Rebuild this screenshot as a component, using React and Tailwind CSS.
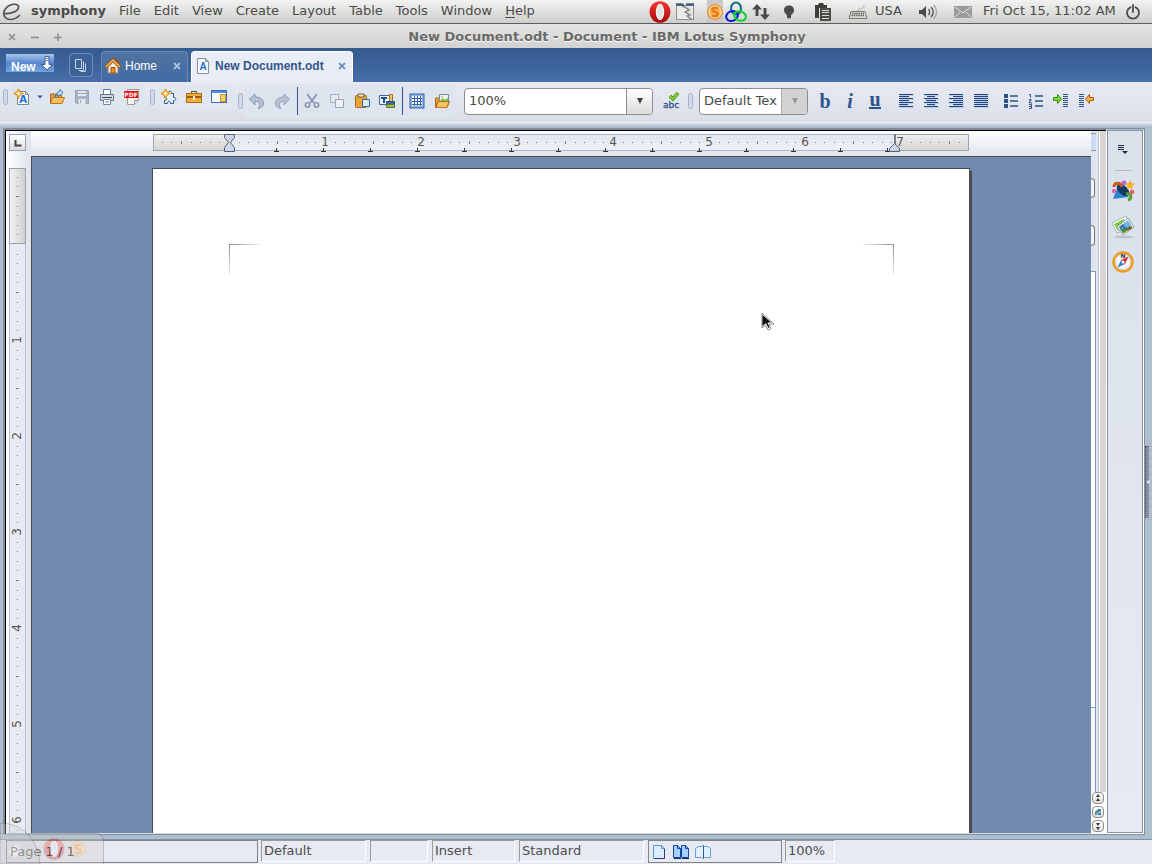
const menus = ['File', 'Edit', 'View', 'Create', 'Layout', 'Table', 'Tools', 'Window'];

const NAVY = '#2f5288';

function Icon({ size = 16, children }) {
  return (
    <svg width={size} height={size} viewBox={`0 0 ${size} ${size}`} fill="none" aria-hidden="true" className="shrink-0">
      {children}
    </svg>
  );
}

function ToolButton({ label, children }) {
  return (
    <button type="button" aria-label={label} className="flex w-[25px] h-6 shrink-0 items-center justify-center pr-px">
      {children}
    </button>
  );
}

function Grip() {
  return <div className="w-[5px] h-4 shrink-0 rounded-sm border border-[#a5b2ca] bg-[#d3daea]" />;
}

function Separator() {
  return (
    <div className="flex w-[5px] shrink-0 justify-center">
      <div className="w-px h-7 bg-[#34558b]" />
    </div>
  );
}

//! Menu bar and title bar ---------------------------------------------------------------------
function OperaLogo() {
  return (
    <Icon size={22}>
      <defs>
        <linearGradient id="opera" x1="0" y1="0" x2="0" y2="1">
          <stop offset="0" stopColor="#f4392f" />
          <stop offset="1" stopColor="#a80a10" />
        </linearGradient>
      </defs>
      <ellipse cx="11" cy="11" rx="10.5" ry="10.8" fill="url(#opera)" />
      <ellipse cx="11" cy="11" rx="4.2" ry="8.2" fill="#f6f1f1" />
      <ellipse cx="11" cy="11" rx="2.6" ry="7.6" fill="#e4e1e1" />
    </Icon>
  );
}

function CoinLogo() {
  return (
    <Icon>
      <circle cx="8" cy="8" r="7.4" fill="#f8b55a" stroke="#e58a2c" />
      <circle cx="8" cy="8" r="6" stroke="#fbe3bd" />
      <path d="M11 4.600C9.500 3.300 5.400 3.400 5.300 5.800c0 2.500 5.600 1.600 5.500 4.300-.1 2.300-3.800 2.600-5.900 1.200" stroke="#f0730c" strokeWidth="2.200" />
    </Icon>
  );
}

function MenuBar() {
  return (
    <div className="flex h-6 shrink-0 items-center border-b border-[#5c5c5c] bg-gradient-to-b from-[#f2f2f1] to-[#cfcfce] text-[13px] leading-5 text-[#4a4a48]">
      <div className="flex w-[31px] shrink-0 items-center pl-[2px]">
        <Icon size={20}>
          <path d="M2.500 11.500C9 12 17.500 9 16.500 4.500 15.500 1 7 1.500 3 7.500 0 12 2.500 17.500 8.500 17.500c4 0 7-2 9.500-4.500" stroke="#555" strokeWidth="1.700" />
        </Icon>
      </div>
      <nav className="flex items-center gap-[13px] pb-[2px]">
        <button type="button" className="font-bold">symphony</button>
        {menus.map((menu) => (
          <button type="button" key={menu}>{menu}</button>
        ))}
        <button type="button"><span className="underline underline-offset-2">H</span>elp</button>
      </nav>

      <div className="ml-auto flex h-full items-center">
        <OperaLogo />
        <div className="flex w-7 justify-center">
          <Icon size={20}>
            <rect x="1.500" y="3.500" width="17" height="14" fill="#ecebe8" stroke="#8d918f" />
            <path d="M1 2.500h6l2 2M11 2.500h8" stroke="#3f5d86" strokeWidth="2.500" />
            <path d="M8 4l6 4-4 2 5 3-3 1 4 3" stroke="#777b7d" strokeWidth="1.200" />
            <path d="M10 4l6 4-4 2 5 3-3 1 3 3" stroke="#b9bcbd" />
          </Icon>
        </div>
        <div className="ml-2 flex h-full w-4 items-center bg-[#c9c9c9]">
          <CoinLogo />
        </div>
        <div className="flex w-[26px] justify-center">
          <Icon size={22}>
            <ellipse cx="11" cy="7.500" rx="5" ry="6" stroke="#146f85" strokeWidth="2" />
            <ellipse cx="7" cy="15" rx="6" ry="4.800" stroke="#0a16d6" strokeWidth="2" transform="rotate(-25 7 15)" />
            <ellipse cx="15" cy="15" rx="6" ry="4.600" stroke="#0cd32d" strokeWidth="2" transform="rotate(20 15 15)" />
          </Icon>
        </div>
        <div className="flex w-6 justify-center">
          <Icon size={18}>
            <path d="M5 1L0 6.500h3.500V13h3V6.500H10zM13 17l5-5.500h-3.500V5h-3v6.500H8z" fill="#4a4a49" />
          </Icon>
        </div>
        <div className="flex w-8 justify-center">
          <Icon>
            <path d="M8 1.500c3 0 5 2 5 4.700 0 2.600-2 3.600-3 5.300v2.300l-2 1-2-1v-2.300C5 9.800 3 8.800 3 6.200c0-2.700 2-4.700 5-4.700z" fill="#4b4b49" />
          </Icon>
        </div>
        <div className="flex w-9 justify-center">
          <Icon size={18}>
            <path d="M1 2h3l1-2h4l1 2h3v3H5v10H1z" fill="#403f3b" />
            <path d="M6 5h11v13H6z" fill="#4c4b45" />
            <path d="M8 7.500h7M8 9.500h7M8 12.500h7M8 15.500h7" stroke="#dedbd0" />
          </Icon>
        </div>
        <div className="flex w-[34px] justify-center">
          <Icon size={20}>
            <path d="M10 9c0-4 7-1 6-6" stroke="#b4b3ae" />
            <path d="M3 9.500h14l2 7H1z" fill="#d9d8d4" stroke="#777671" />
            <path d="M4 11.500h12M3.500 13.500h13" stroke="#666560" strokeWidth="1.400" strokeDasharray="1.500 .7" />
          </Icon>
        </div>
        <span className="pb-[2px]">USA</span>
        <div className="ml-4 flex w-5 justify-center">
          <Icon size={20}>
            <path d="M1 8h3l4-4v12l-4-4H1z" fill="#4a4a48" />
            <path d="M10.500 7c1.500 1.500 1.500 4.500 0 6M13 5c3 3 3 7 0 10" stroke="#5a5a58" strokeWidth="1.500" />
            <path d="M15.500 3c4 4 4 10 0 14" stroke="#aaa" strokeWidth="1.500" />
          </Icon>
        </div>
        <div className="ml-4 mr-[15px] flex w-[18px] justify-center">
          <Icon size={18}>
            <rect y="3" width="18" height="12" fill="#9b9b9a" />
            <path d="M1 4l8 6 8-6M1 14l5-5M17 14l-5-5" stroke="#e2e2e1" />
          </Icon>
        </div>
        <button type="button" className="w-[130px] -ml-1 pb-[2px] text-left whitespace-nowrap">Fri Oct 15, 11:02 AM</button>
        <button type="button" aria-label="Power" className="ml-3 mr-[11px]">
          <Icon>
            <path d="M5.500 3.200a6 6 0 1 0 5 0M8 1v7" stroke="#4c4c4a" strokeWidth="1.800" strokeLinecap="round" />
          </Icon>
        </button>
      </div>
    </div>
  );
}

function TitleBar() {
  return (
    <header className="flex h-6 shrink-0 items-center bg-gradient-to-b from-[#e4e4e3] to-[#d2d2d1] pt-[2px]">
      <div className="flex w-[62px] shrink-0 items-center justify-between pl-2">
        <button type="button" aria-label="Close window">
          <Icon size={8}><path d="M1 1l6 6M7 1L1 7" stroke="#8f8f8e" strokeWidth="1.600" /></Icon>
        </button>
        <button type="button" aria-label="Minimize window">
          <Icon size={8}><path d="M0 4.500h8" stroke="#8f8f8e" strokeWidth="1.600" /></Icon>
        </button>
        <button type="button" aria-label="Maximize window">
          <Icon size={8}><path d="M0 4.500h8M4 .5v8" stroke="#8f8f8e" strokeWidth="1.600" /></Icon>
        </button>
      </div>
      <h1 className="flex-1 text-center text-[13px] font-bold leading-5 text-[#696968] [text-shadow:0_1px_0_#fff]">
        New Document.odt - Document - IBM Lotus Symphony
      </h1>
    </header>
  );
}

//! Document tabs ------------------------------------------------------------------------------
function CloseMark({ color }) {
  return (
    <Icon size={8}>
      <path d="M1 1l6 6M7 1L1 7" stroke={color} strokeWidth="1.800" />
    </Icon>
  );
}

function TabBar() {
  return (
    <div className="flex h-[34px] shrink-0 items-end bg-gradient-to-b from-[#365b8d] via-[#3d639c] to-[#466ea8] font-['Liberation_Sans',sans-serif] text-[12px]">
      <button type="button" className="ml-[6px] mb-[10px] flex h-[18px] w-12 items-center justify-between bg-gradient-to-b from-[#a9c5ec] via-[#5787cf] to-[#74a2e2] pl-[5px] font-bold leading-4 text-white">
        <span className="pt-[7px]">New</span>
        <Icon size={14}>
          <path d="M5 .5h4v8h3.500L7 14 1.500 8.500H5z" fill="#fff" stroke="#3e5d8d" />
          <path d="M5 2.500h4M5 4.500h4" stroke="#6d88ac" />
        </Icon>
      </button>
      <button type="button" aria-label="Show thumbnails" className="ml-[15px] mb-[5px] flex size-6 items-center justify-center rounded-sm border border-[#6e8fbd] bg-[#3d6095]">
        <Icon size={14}>
          <path d="M1.500 1.500h6v9h-6z" stroke="#c4d3e9" />
          <path d="M9.500 3.500v9h-5M11.500 5.500v8h-5" stroke="#c4d3e9" />
        </Icon>
      </button>
      <div className="ml-2 flex h-[31px] w-[87px] items-center rounded-t border border-b-0 border-[#6788b6] bg-gradient-to-b from-[#51739f] to-[#426aa6] pl-[3px] pr-[6px] pb-[2px] text-white">
        <button type="button" className="flex flex-1 items-center gap-1">
          <Icon>
            <path d="M11 2h3v5h-3z" fill="#9b5a2b" />
            <path d="M3 8v7h10V8L8 3z" fill="#f4ede1" stroke="#a3846a" />
            <path d="M1 9l7-7 7 7" stroke="#8a4a18" strokeWidth="3.200" />
            <path d="M1 9l7-7 7 7" stroke="#f8aa3e" strokeWidth="1.800" />
            <path d="M6 9.500h4V15H6z" fill="#ee8d25" stroke="#9c5519" />
          </Icon>
          Home
        </button>
        <button type="button" aria-label="Close Home"><CloseMark color="#a9c3e5" /></button>
      </div>
      <div className="ml-[3px] flex h-[31px] w-[162px] items-center rounded-t border border-b-0 border-white bg-[#e9edf5] pl-[3px] pr-[6px] pb-[2px]">
        <button type="button" className="flex flex-1 items-center gap-1 font-bold whitespace-nowrap text-[#34568c]">
          <Icon>
            <path d="M2.500.5h8l3 3v12h-11z" fill="#f7f9fc" stroke="#858d98" />
            <path d="M10.500.5v3h3" stroke="#858d98" />
            <text x="8" y="12" textAnchor="middle" fontSize="10" fontWeight="700" fill="#1d6fd1">A</text>
          </Icon>
          New Document.odt
        </button>
        <button type="button" aria-label="Close New Document.odt"><CloseMark color="#7092bd" /></button>
      </div>
    </div>
  );
}

//! Toolbar ------------------------------------------------------------------------------------
function Combo({ label, value, width, disabled }) {
  return (
    <div className={`grid h-[27px] shrink-0 grid-cols-[1fr_26px] rounded border border-[#8c8c8b] bg-white ${width}`}>
      <select aria-label={label} disabled={disabled} className="col-start-1 col-end-3 row-start-1 h-[25px] w-full appearance-none bg-transparent pl-1 text-[13px] leading-5 text-[#484848] opacity-100">
        <option>{value}</option>
      </select>
      <span
        className={
          disabled
            ? 'pointer-events-none col-start-2 row-start-1 flex items-center justify-center rounded-r border-l border-[#aaa] bg-[#d3d3d2]'
            : 'pointer-events-none col-start-2 row-start-1 flex items-center justify-center rounded-r border-l border-[#8c8c8b] bg-gradient-to-b from-white to-[#dcdcdb]'
        }
      >
        <Icon size={8}>
          <path d="M1 1h6L4 7z" fill={disabled ? '#999' : '#444'} />
        </Icon>
      </span>
    </div>
  );
}

function Sparkle() {
  return <path d="M4.500 0L6 3l3 1.500L6 6 4.500 9 3 6 0 4.500 3 3z" fill="#ffefc4" stroke="#e5950f" strokeWidth="1.200" />;
}

function FolderBase() {
  return (
    <>
      <path d="M1.500 14V5h5l1 1.500h5V14z" fill="#e9a03a" stroke="#a8691c" />
      <path d="M1.500 14.500l2-6h12l-2.500 6z" fill="#f9c163" stroke="#b9751c" />
    </>
  );
}

function TextLines({ lines }) {
  return (
    <Icon>
      {lines.map(([x1, x2], i) => (
        <g key={i}>
          <path d={`M${x1 + 1} ${2.5 + i * 2}H${x2 + 1}`} stroke="#c3cddd" />
          <path d={`M${x1} ${1.5 + i * 2}H${x2}`} stroke="#1f4684" />
        </g>
      ))}
    </Icon>
  );
}

const alignments = [
  { label: 'Align left', lines: [[1, 15], [1, 11], [1, 15], [1, 11], [1, 15], [1, 10], [1, 15]] },
  { label: 'Center', lines: [[1, 15], [4, 12], [1, 15], [3, 13], [1, 15], [4, 12], [1, 15]] },
  { label: 'Align right', lines: [[1, 15], [5, 15], [1, 15], [5, 15], [1, 15], [5, 15], [1, 15]] },
  { label: 'Justify', lines: [[1, 15], [1, 15], [1, 15], [1, 15], [1, 15], [1, 15], [1, 15]] },
];

function Toolbar() {
  return (
    <div className="flex h-[41px] shrink-0 items-start border-b border-[#eef1f6] bg-gradient-to-b from-[#e7eaf3] to-[#d9dfe9] pl-[3px] pt-[2px]">
      <div className="flex h-[26px] items-center">
        <Grip />
      </div>
      <div className="ml-[2px] flex h-[26px] items-center rounded bg-[#dfe5ef]">
        <ToolButton label="New">
          <Icon>
            <path d="M3.500 2.500h8l3 3v10h-11z" fill="#fafcff" stroke="#7c8797" />
            <path d="M11.500 2.500v3h3" stroke="#7c8797" />
            <text x="9" y="14" textAnchor="middle" fontSize="10" fontWeight="700" fill="#1976d6">A</text>
            <Sparkle />
          </Icon>
        </ToolButton>
        <button type="button" aria-label="New document type" className="flex h-6 w-[10px] items-center justify-center">
          <Icon size={6}><path d="M.5 1.500h5L3 4.500z" fill={NAVY} /></Icon>
        </button>
        <ToolButton label="Open">
          <Icon>
            <FolderBase />
            <path d="M6 9c0-3 1-4 3-4V7.500L14 4 11 .5v2C8 3 6 5 6 9z" fill="#d5e9fb" stroke="#3d79b8" />
          </Icon>
        </ToolButton>
        <ToolButton label="Save">
          <Icon>
            <path d="M1.500 1.500h13v13h-12l-1-1z" fill="#a9b5c6" stroke="#95a2b6" />
            <path d="M4 2h8v5H4zM4.500 10h7v5h-7z" fill="#e3e8ef" />
            <path d="M4 4.500h8M6.500 11v3" stroke="#9ba8ba" />
          </Icon>
        </ToolButton>
        <ToolButton label="Print">
          <Icon>
            <path d="M4.500 6V.5h7V6" fill="#fff" stroke="#5e7fae" />
            <path d="M1.500 5.500h13v6h-13z" fill="#d4d9e2" stroke="#6c7482" />
            <path d="M3 8.500h10" stroke="#444d5c" />
            <path d="M4.500 10.500h7v5h-7z" fill="#fff" stroke="#7d8797" />
            <path d="M6 13h4" stroke="#4e89cd" />
          </Icon>
        </ToolButton>
        <ToolButton label="Export to PDF">
          <Icon>
            <path d="M3.500.5h11v11l-4 4h-7z" fill="#f1f1f1" stroke="#9b9b9b" />
            <path d="M10.500 15.500v-4h4" fill="#ddd" stroke="#9b9b9b" />
            <rect y="2" width="14" height="7" fill="#e90d0d" />
            <text x="7" y="8" textAnchor="middle" fontSize="6" fontWeight="700" fill="#fff">PDF</text>
          </Icon>
        </ToolButton>
      </div>
      <div className="ml-[5px] flex h-[26px] items-center">
        <Grip />
      </div>
      <div className="ml-[2px] flex h-[26px] items-center rounded bg-[#e1e6f0]">
        <ToolButton label="Plug-ins">
          <Icon>
            <path d="M4.500 4.500h3c-1-3 4-3 3 0h2v4c3-1 3 4 0 3v3h-3c0-3-3-3-3 0h-3v-3c3 0 3-3 0-3z" fill="#e4eefb" stroke="#34598f" />
            <Sparkle />
          </Icon>
        </ToolButton>
        <ToolButton label="Toolbox">
          <Icon>
            <path d="M5.500 5V2.500h5V5" stroke="#6d4c1c" />
            <rect x=".5" y="4.500" width="15" height="9" fill="#f2ae3c" stroke="#a9701b" />
            <path d="M1 8h14" stroke="#a05d10" strokeWidth="2" />
            <path d="M7 7h2v4H7z" fill="#f8edc9" />
          </Icon>
        </ToolButton>
        <ToolButton label="Sidebar">
          <Icon>
            <rect x=".5" y="1.500" width="15" height="12" fill="#f4f8fe" stroke="#3c6eb3" />
            <path d="M1 3h14" stroke="#5590dc" strokeWidth="2" />
            <rect x="9.500" y="5.500" width="5" height="7" fill="#f7d16a" stroke="#cc9730" />
          </Icon>
        </ToolButton>
      </div>
      <div className="ml-[6px] flex h-[34px] items-center">
        <Grip />
      </div>
      <div className="ml-[2px] flex h-[34px] items-center rounded bg-[#dfe5ef]">
        <ToolButton label="Undo">
          <Icon>
            <path d="M.5 6L6 1v3c7 0 9 4 8.500 7-.3 2-2 4-5.500 4.500C12 12 11 8 6 8.500V12z" fill="#b5c1d4" stroke="#8999b3" />
          </Icon>
        </ToolButton>
        <ToolButton label="Redo">
          <Icon>
            <path d="M15.500 6L10 1v3c-7 0-9 4-8.500 7 .3 2 2 4 5.500 4.500C4 12 5 8 10 8.500V12z" fill="#b8c2d2" stroke="#95a3b8" />
          </Icon>
        </ToolButton>
        <Separator />
        <ToolButton label="Cut">
          <Icon>
            <path d="M3 1l7 9M13 1L6 10" stroke="#8797ae" strokeWidth="2" />
            <circle cx="3.500" cy="12" r="2.200" stroke="#8797ae" strokeWidth="1.600" />
            <circle cx="12.500" cy="12" r="2.200" stroke="#8797ae" strokeWidth="1.600" />
          </Icon>
        </ToolButton>
        <ToolButton label="Copy">
          <Icon>
            <path d="M1.500 1.500h8v8h-8z" fill="#e4e8ef" stroke="#a5afbf" />
            <path d="M6.500 6.500h8v8h-8z" fill="#edf0f5" stroke="#9aa6b8" />
          </Icon>
        </ToolButton>
        <ToolButton label="Paste">
          <Icon>
            <rect x="1.500" y="2.500" width="11" height="12" rx="1" fill="#e9a238" stroke="#a76c1c" />
            <path d="M4 1h6v3H4z" fill="#f7e3bf" stroke="#7b5a2b" />
            <path d="M8.500 6.500h7v7h-7z" fill="#dceafa" stroke="#2f63ab" />
          </Icon>
        </ToolButton>
        <ToolButton label="Paste format">
          <Icon>
            <path d="M.5 2.500h10v9H.5z" fill="#eef4fc" stroke="#41669c" />
            <path d="M2 5h6M5 5v5" stroke="#1d4f97" strokeWidth="2" />
            <path d="M10.500 1.500h3v7h-3z" fill="#f7c662" stroke="#a9701b" />
            <path d="M7.500 8.500h8v3h-8z" fill="#3c6cb0" stroke="#264d86" />
            <path d="M7.500 11.500h8v3h-8z" fill="#9ac04d" stroke="#5f7b27" />
          </Icon>
        </ToolButton>
        <Separator />
        <ToolButton label="Insert table">
          <Icon>
            <rect x="1" y="1" width="14" height="14" fill="#8db2e0" stroke="#2f62a8" />
            <rect x="3" y="3" width="10" height="10" fill="#fff" />
            <path d="M3 5.500h10M3 8.500h10M3 11.500h10M5.500 3v10M8.500 3v10M11.500 3v10" stroke="#2f62a8" />
          </Icon>
        </ToolButton>
        <ToolButton label="Insert picture">
          <Icon>
            <FolderBase />
            <path d="M5.500 1.500h9v7h-9z" fill="#e9f5fb" stroke="#79899c" />
            <path d="M6 8l3-3 2 2 3-2v3z" fill="#74b53a" />
            <circle cx="8" cy="3.500" r="1" fill="#eab92c" />
            <path d="M2 14.500l2-6h11l-2 6z" fill="#f9c163" stroke="#b9751c" />
          </Icon>
        </ToolButton>
      </div>

      <div className="ml-[9px] flex h-[34px] items-center">
        <Combo label="Zoom" value="100%" width="w-[189px]" />
        <div className="ml-[6px]">
          <ToolButton label="Check spelling">
            <Icon size={18}>
              <text x="9" y="16" textAnchor="middle" fontSize="9" fill="#2f4f86" stroke="#2f4f86" strokeWidth=".3">abc</text>
              <path d="M8 4l3 3 5-6" stroke="#3f8a12" strokeWidth="3.500" />
              <path d="M8 4l3 3 5-6" stroke="#7ed12c" strokeWidth="2" />
            </Icon>
          </ToolButton>
        </div>
        <div className="ml-[4px]"><Grip /></div>
        <div className="ml-[6px]">
          <Combo label="Paragraph style" value="Default Tex" width="w-[109px]" disabled />
        </div>
        <div className="ml-[5px] flex font-['Liberation_Serif',serif] text-[20px] font-bold leading-6 text-[#2f5288]">
          <ToolButton label="Bold">b</ToolButton>
          <ToolButton label="Italic"><i>i</i></ToolButton>
          <ToolButton label="Underline"><span className="-mt-[3px] h-[18px] border-b-2 border-[#2f5288] leading-4">u</span></ToolButton>
        </div>
        <div className="ml-[6px] flex">
          {alignments.map(({ label, lines }) => (
            <ToolButton key={label} label={label}>
              <TextLines lines={lines} />
            </ToolButton>
          ))}
        </div>
        <div className="ml-[5px] flex">
          <ToolButton label="Bullets">
            <Icon>
              <path d="M1 3h4M1 8h4M1 13h4" stroke={NAVY} strokeWidth="4" />
              <path d="M7 3h8M7 8h8M7 13h8" stroke={NAVY} strokeWidth="1.500" />
            </Icon>
          </ToolButton>
          <ToolButton label="Numbering">
            <Icon>
              <path d="M1 1.500h1.500v3M1 6.500h2v1.500H1.500v2H4M1 11.500h2.500v4H1M1 13.500h2" stroke={NAVY} />
              <path d="M7 3h8M7 8h8M7 13h8" stroke={NAVY} strokeWidth="1.500" />
            </Icon>
          </ToolButton>
          <ToolButton label="Increase indent">
            <Icon>
              <path d="M12.500 1v14" stroke={NAVY} strokeWidth="5" strokeDasharray="1 1" />
              <path d="M.5 4.500h4v-3l4 4.500-4 4.500v-3h-4z" fill="#7cdc2f" stroke="#3f8a12" />
            </Icon>
          </ToolButton>
          <ToolButton label="Decrease indent">
            <Icon>
              <path d="M3.500 1v14" stroke={NAVY} strokeWidth="5" strokeDasharray="1 1" />
              <path d="M15.500 4.500h-4v-3l-4 4.500 4 4.500v-3h4z" fill="#f9b84a" stroke="#a8570f" />
            </Icon>
          </ToolButton>
        </div>
      </div>
    </div>
  );
}

//! Rulers: one inch is 96 pixels, ten divisions to the inch --------------------------------------
const INCH = 96;

function marks(from, to) {
  const list = [];
  for (let k = from; k <= to; k++) {
    if (k % 10 !== 0) list.push({ k, at: Math.round(k * 9.6), half: k % 5 === 0 });
  }
  return list;
}

function HorizontalRuler() {
  const origin = 76;
  const stops = Array.from({ length: 14 }, (_, i) => 124 + i * 47);
  return (
    <svg width="816" height="20" viewBox="0 0 816 20" className="shrink-0">
      <defs>
        <linearGradient id="margin" x1="0" y1="0" x2="0" y2="1">
          <stop offset="0" stopColor="#f0f0ef" />
          <stop offset="1" stopColor="#d3d3d2" />
        </linearGradient>
        <linearGradient id="ruler" x1="0" y1="0" x2="0" y2="1">
          <stop offset="0" stopColor="#e2e6ee" />
          <stop offset="1" stopColor="#eff1f5" />
        </linearGradient>
      </defs>
      <rect x=".5" y=".5" width="815" height="16" fill="url(#ruler)" stroke="#a9b7cc" />
      <rect x=".5" y=".5" width="76" height="16" fill="url(#margin)" stroke="#97a3b5" />
      <rect x="742.5" y=".5" width="73" height="16" fill="url(#margin)" stroke="#97a3b5" />
      {marks(-7, 76).map(({ k, at, half }) => (
        <rect key={k} x={origin + at} y={half ? 7 : 8} width="1" height={half ? 3 : 1} fill="#6b7fa3" />
      ))}
      {stops.map((x) => (
        <path key={x} d={`M${x - 3} 17.500h5M${x - 0.5} 14v3`} stroke="#333" />
      ))}
      {[1, 2, 3, 4, 5, 6].map((n) => (
        <text key={n} x={origin + n * INCH} y="12" textAnchor="middle" fontSize="12" fill="#555">{n}</text>
      ))}
      <text x="747" y="12" textAnchor="middle" fontSize="12" fill="#555">7</text>
      <path d="M71.500.5h10v3l-4 5 4 5v4h-10v-4l4-5-4-5z" fill="#cdd6e8" stroke="#53607a" />
      <path d="M742 0v10" stroke="#777f8d" strokeWidth="2" />
      <path d="M736.500 17.500v-3l5-5 5 5v3z" fill="#cdd6e8" stroke="#53607a" />
    </svg>
  );
}

function VerticalRuler() {
  const origin = 76;
  return (
    <svg width="17" height="1056" viewBox="0 0 17 1056" className="shrink-0">
      <defs>
        <linearGradient id="vmargin">
          <stop offset="0" stopColor="#f3f3f3" />
          <stop offset="1" stopColor="#cfcfce" />
        </linearGradient>
      </defs>
      <rect x=".5" y=".5" width="16" height="1055" fill="#e8ebf1" stroke="#b3bfd2" />
      <rect x=".5" y=".5" width="16" height="75" fill="url(#vmargin)" stroke="#97a3b5" />
      {marks(-7, 98).map(({ k, at, half }) => (
        <rect key={k} x={half ? 7 : 8} y={origin + at} width={half ? 3 : 1} height="1" fill="#6b7fa3" />
      ))}
      {[1, 2, 3, 4, 5, 6].map((n) => (
        <text key={n} transform={`translate(12 ${origin + n * INCH}) rotate(-90)`} textAnchor="middle" fontSize="12" fill="#555">{n}</text>
      ))}
    </svg>
  );
}

//! Scroll bar and side panel ------------------------------------------------------------------
function ScrollButton({ label, children }) {
  return (
    <button type="button" aria-label={label} className="flex size-3 shrink-0 items-center justify-center rounded border border-[#8f8f8e] bg-gradient-to-b from-white to-[#dededd]">
      <Icon size={8}>{children}</Icon>
    </button>
  );
}

function ScrollBar() {
  return (
    <div className="flex w-[15px] shrink-0 flex-col bg-white">
      <div className="flex min-h-0 flex-1">
        <div className="flex w-[5px] shrink-0 flex-col bg-[#dfe5ef]">
          <div className="mt-[2px] h-[18px] border-y border-[#7f97b8] bg-[#cddcf0]" />
          <div className="mt-[27px] h-5 w-1 rounded-r border border-l-0 border-[#777] bg-[#f3f3f2]" />
          <div className="mt-[27px] h-[21px] w-1 rounded-r border border-l-0 border-[#777] bg-[#f3f3f2]" />
          <div className="mt-[25px] h-[437px] border border-l-0 border-[#7f97bb] bg-white" />
          <div className="flex-1 border-r border-[#7f97bb] bg-[#f5f7fb]" />
        </div>
        <div className="w-[2px] bg-[#dfe6f1]" />
        <div className="w-px bg-[#bfc0c2]" />
        <div className="w-px bg-white" />
        <div className="w-[6px] bg-[#d5d5d4]" />
      </div>
      <div className="flex flex-col items-start gap-[2px] bg-[#fafafa] pl-px pb-[2px]">
        <ScrollButton label="Previous page">
          <path d="M4 0l2 3H2zM4 4l2 3H2z" fill="#333" />
        </ScrollButton>
        <ScrollButton label="Navigation">
          <path d="M1 7V4l3-3h3v6z" fill="#4c88a8" />
          <path d="M3 7c0-2 1-3 4-3" stroke="#c7e0ea" />
        </ScrollButton>
        <ScrollButton label="Next page">
          <path d="M2 1h4L4 4zM2 5h4L4 8z" fill="#333" />
        </ScrollButton>
      </div>
    </div>
  );
}

function SidePanel() {
  return (
    <aside className="flex w-9 shrink-0 flex-col items-center border border-[#8494a6] border-r-[#908f90] bg-gradient-to-b from-[#dae1eb] to-[#e6eaf3] pr-1 pt-[6px]">
      <button type="button" aria-label="Sidebar menu" className="flex h-6 items-center">
        <Icon size={12}>
          <path d="M1 2.500h6M1 4.500h6M1 6.500h6" stroke="#1e2940" />
          <path d="M5 8h6l-3 3z" fill="#1e2940" />
        </Icon>
      </button>
      <hr className="mt-[9px] w-[17px] border-[#b5b7ba]" />
      <button type="button" aria-label="Gallery" className="mt-2">
        <Icon size={24}>
          <path d="M2 20l5-13 11 11z" fill="#2f83cf" />
          <ellipse cx="12" cy="11" rx="7.500" ry="4.500" fill="#143b66" transform="rotate(42 12 11)" />
          <path d="M3 8c0-5 7-5 8 0" stroke="#c65c1d" strokeWidth="3" />
          <path d="M15 15c6-1 6 5 2 6" stroke="#5a9f31" strokeWidth="3" />
          <circle cx="13" cy="4" r="2.400" fill="#b064dd" />
          <circle cx="3" cy="12" r="2.300" fill="#e665b2" />
          <circle cx="21" cy="13" r="2.300" fill="#ee5861" />
          <path d="M19 1l1.500 3 3.500.5-2.500 2.500.5 3.500-3-1.700-3 1.700.5-3.500L14 4.500l3.500-.5z" fill="#f4b429" />
        </Icon>
      </button>
      <button type="button" aria-label="Clip art" className="mt-3">
        <Icon size={24}>
          <ellipse cx="13" cy="22" rx="10" ry="1.500" fill="#bcc2cb" />
          <path d="M1 8L15 1l4 12L6 18z" fill="#fff" stroke="#a7adb3" />
          <path d="M3 9l10-5 3 6-9 6z" fill="#7bc93f" />
          <path d="M6 12L17 3l6 9-11 8z" fill="#fff" stroke="#929aa3" />
          <path d="M8 12l9-7 4.500 7-9.500 6z" fill="#6fb8e6" />
          <path d="M9 14l5-1 6-1 1.500.5-9.500 6z" fill="#4c932c" />
          <path d="M8 12l4-3 4 5-2 1-3-3-1 3z" fill="#3973ae" />
          <path d="M15 14l4-3 2 2-3 2z" fill="#8d5426" />
        </Icon>
      </button>
      <button type="button" aria-label="Navigator" className="mt-[11px]">
        <Icon size={24}>
          <circle cx="12" cy="12" r="9.500" fill="#f5f8fb" stroke="#ee9a1e" strokeWidth="2.500" />
          <circle cx="12" cy="12" r="7.500" stroke="#c8ccd0" />
          <text x="12" y="8" textAnchor="middle" fontSize="6" fontWeight="700" fill="#333">N</text>
          <path d="M17.500 6.500L14 14l-4-4z" fill="#db2b2b" />
          <path d="M6.500 17.500L10 10l4 4z" fill="#3f7ac2" />
          <circle cx="12" cy="12" r="1.500" fill="#fff" />
        </Icon>
      </button>
    </aside>
  );
}

//! Page -----------------------------------------------------------------------------------------
function MarginCorner({ flip }) {
  return (
    <svg width="31" height="31" viewBox="0 0 31 31" className={flip ? '-scale-x-100' : ''}>
      <defs>
        <linearGradient id="fadeX"><stop stopColor="#8c8c8c" /><stop offset="1" stopColor="#eee" /></linearGradient>
        <linearGradient id="fadeY" x2="0" y2="1"><stop stopColor="#8c8c8c" /><stop offset="1" stopColor="#eee" /></linearGradient>
      </defs>
      <rect width="31" height="1" fill="url(#fadeX)" />
      <rect width="1" height="31" fill="url(#fadeY)" />
    </svg>
  );
}

function Workspace() {
  return (
    <main className="flex min-h-0 flex-1 bg-[#aebece] pl-[3px]">
      <div className="flex min-w-0 flex-1 border-b border-[#8292a4]">
        <div className="flex min-w-0 flex-1 border-l-2 border-t-2 border-[#848c9b]">
          <div className="flex min-w-0 flex-1 border-l border-t border-black">
            <div className="flex w-[25px] shrink-0 flex-col items-center bg-gradient-to-r from-white to-[#dde3ec] pr-[2px]">
              <button type="button" aria-label="Tab type" className="mt-[3px] flex size-[17px] shrink-0 items-center justify-center border border-[#97a3b5] bg-gradient-to-b from-white to-[#ddd]">
                <Icon size={8}><path d="M1.500 1v5.500h6" stroke="#444" strokeWidth="2" /></Icon>
              </button>
              <div className="mt-[17px] flex min-h-0 flex-1 items-start overflow-hidden">
                <VerticalRuler />
              </div>
            </div>
            <div className="flex min-w-0 flex-1 flex-col border-b border-[#d8d8d8]">
              <div className="flex h-[25px] shrink-0 justify-center bg-gradient-to-b from-white to-[#dfe4ec] px-px pt-[3px]">
                <HorizontalRuler />
              </div>
              <div className="flex min-h-0 flex-1 justify-center overflow-hidden border-l border-t border-[#4d4d4d] bg-[#718ab0] pr-px pt-[11px]">
                <div className="relative w-[818px] shrink-0 border border-b-0 border-[#4b4b4b] bg-white shadow-[2px_3px_0_0_#4b4b4b]">
                  <div className="flex justify-between pl-[76px] pr-[75px] pt-[75px]">
                    <MarginCorner />
                    <MarginCorner flip />
                  </div>
                  <svg width="14" height="20" viewBox="0 0 14 20" className="absolute left-[608px] top-[143px]" aria-hidden="true">
                    <path d="M1 1v15l3.500-3 2.500 5 3-1.500L8 12h5z" fill="#fff" stroke="#8a8a8a" />
                    <path d="M1.500 3v11L5 11l2.500 5 1-.5L6.500 10.500H10z" fill="#0b0b0b" />
                  </svg>
                </div>
              </div>
            </div>
            <ScrollBar />
          </div>
        </div>
        <div className="flex border-t border-[#848c9b] pt-px">
          <div className="flex border-x border-b border-white">
            <SidePanel />
          </div>
        </div>
      </div>
      <div className="flex w-2 shrink-0 items-center border-l border-[#8292a4]">
        <button type="button" aria-label="Collapse sidebar" className="flex h-[72px] w-1 items-center border-l border-t border-dotted border-[#444] bg-[#8292a4]">
          <Icon size={4}><path d="M3.500 0v4L0 2z" fill="#e9eff8" /></Icon>
        </button>
      </div>
    </main>
  );
}

//! Status bar -----------------------------------------------------------------------------------
const inset = 'h-[22px] border border-[#9a9a9b] border-r-white border-b-white px-[2px] text-left whitespace-nowrap';

function StatusBar() {
  return (
    <footer className="relative mt-1 flex h-[25px] shrink-0 gap-1 border-t border-[#8292a4] bg-[#e7eaf2] pl-[6px] text-[13px] leading-5 text-[#4d4d4d]">
      <div className="h-[23px] w-[252px] border border-[#848484] pl-[3px] pt-px">Page 1 / 1</div>
      <button type="button" className={`w-[105px] -ml-px ${inset}`}>Default</button>
      <div className={`w-[58px] ${inset}`} />
      <button type="button" className={`w-[83px] ${inset}`}>Insert</button>
      <button type="button" className={`w-[125px] ${inset}`}>Standard</button>
      <div className="flex h-[23px] w-[134px] items-center gap-[6px] border border-[#848484] pl-[2px]">
        <button type="button" aria-label="Single page">
          <Icon><path d="M2.500 1.500h8l3 3v10h-11z" fill="#dcecff" stroke="#5a94d0" /><path d="M10.500 1.500v3h3" stroke="#5a94d0" /><path d="M3 14.500h10.500V5" stroke="#27456f" /></Icon>
        </button>
        <button type="button" aria-label="Several pages">
          <Icon>
            <path d="M.5 1.500h4l3 3v9h-7zM8.500 1.500h4l3 3v9h-7z" fill="#a9d1ff" stroke="#1145ac" />
            <path d="M4.500 1.500v3h3M12.500 1.500v3h3" stroke="#1145ac" />
            <path d="M1 14.500h7M9 14.500h7" stroke="#15284d" />
          </Icon>
        </button>
        <button type="button" aria-label="Book view">
          <Icon>
            <path d="M.5 4.500l3-2h3L8 1l1.500 1.500h3l3 2v9h-6L8 15l-1.500-1.500h-6z" fill="#e2f1ff" stroke="#65a0d8" />
            <path d="M8.500 2v12" stroke="#34577f" />
          </Icon>
        </button>
      </div>
      <button type="button" className={`w-[50px] -ml-px ${inset}`}>100%</button>

      {/* faded launcher over the corner of the screen */}
      <div className="pointer-events-none absolute bottom-0 left-0 flex h-[31px] w-[104px] items-center gap-[5px] overflow-hidden rounded-tr-lg border-r border-t border-[#555] bg-[#ccc] pl-[43px] opacity-30">
        <OperaLogo />
        <CoinLogo />
      </div>
      <svg width="41" height="42" viewBox="0 0 41 42" className="pointer-events-none absolute bottom-0 left-0 opacity-30" aria-hidden="true">
        <path d="M0 1c22 0 38 16 40 41H0z" fill="#ccc" stroke="#555" />
        <path d="M8 30l8-8 6 6-6 8z" fill="#fff" />
      </svg>
    </footer>
  );
}

export default function App() {
  return (
    <div className="flex h-screen w-full flex-col overflow-hidden bg-[#aebece] font-['DejaVu_Sans',sans-serif]">
      <MenuBar />
      <TitleBar />
      <TabBar />
      <Toolbar />
      <div className="h-[5px] shrink-0 bg-gradient-to-b from-[#d7deea] to-[#a6b4c5]" />
      <Workspace />
      <StatusBar />
    </div>
  );
}
